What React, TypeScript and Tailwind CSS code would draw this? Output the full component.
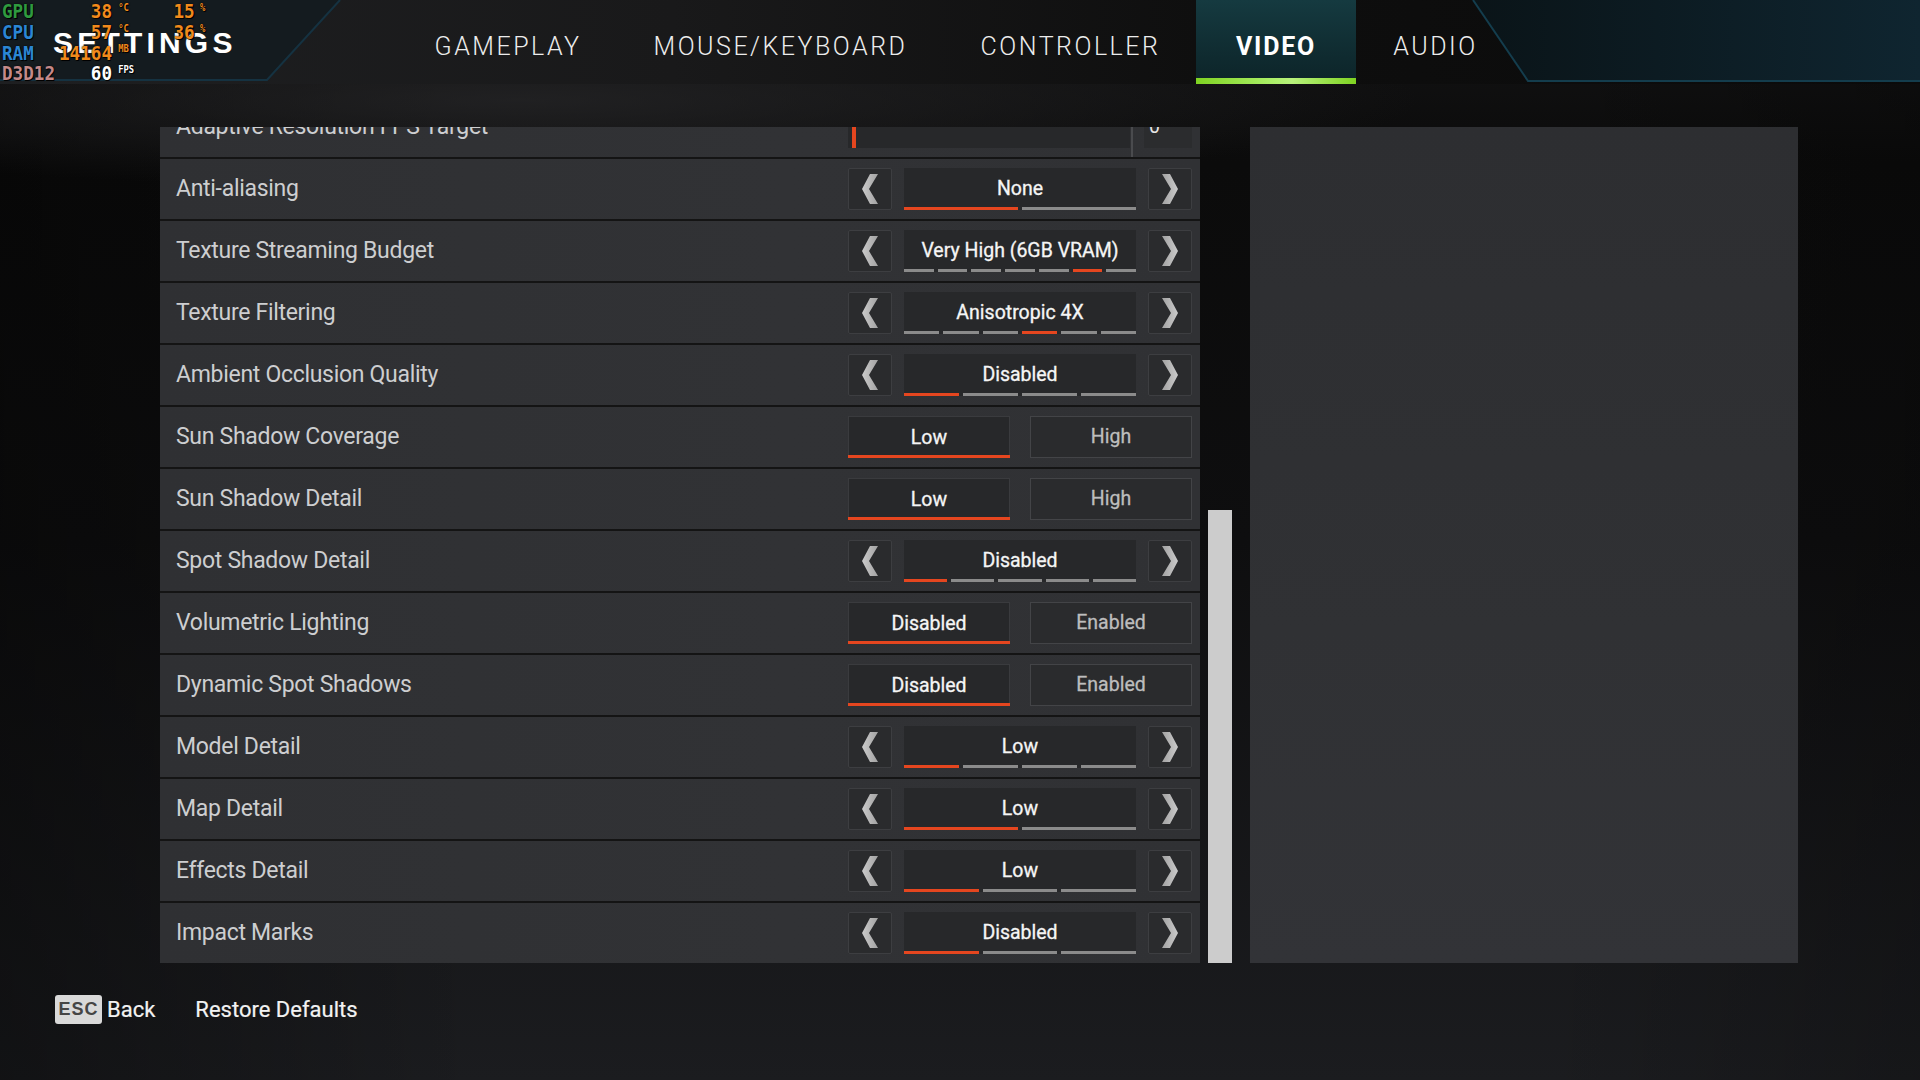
import React from "react";

type Row =
  | { kind: "cycle"; label: string; value: string; segs: number; active: number }
  | { kind: "toggle"; label: string; a: string; b: string }
  | { kind: "slider"; label: string; value: string };

const rows: Row[] = [
  { kind: "slider", label: "Adaptive Resolution FPS Target", value: "0" },
  { kind: "cycle", label: "Anti-aliasing", value: "None", segs: 2, active: 0 },
  { kind: "cycle", label: "Texture Streaming Budget", value: "Very High (6GB VRAM)", segs: 7, active: 5 },
  { kind: "cycle", label: "Texture Filtering", value: "Anisotropic 4X", segs: 6, active: 3 },
  { kind: "cycle", label: "Ambient Occlusion Quality", value: "Disabled", segs: 4, active: 0 },
  { kind: "toggle", label: "Sun Shadow Coverage", a: "Low", b: "High" },
  { kind: "toggle", label: "Sun Shadow Detail", a: "Low", b: "High" },
  { kind: "cycle", label: "Spot Shadow Detail", value: "Disabled", segs: 5, active: 0 },
  { kind: "toggle", label: "Volumetric Lighting", a: "Disabled", b: "Enabled" },
  { kind: "toggle", label: "Dynamic Spot Shadows", a: "Disabled", b: "Enabled" },
  { kind: "cycle", label: "Model Detail", value: "Low", segs: 4, active: 0 },
  { kind: "cycle", label: "Map Detail", value: "Low", segs: 2, active: 0 },
  { kind: "cycle", label: "Effects Detail", value: "Low", segs: 3, active: 0 },
  { kind: "cycle", label: "Impact Marks", value: "Disabled", segs: 3, active: 0 },
];

function Chevron({ dir }: { dir: "l" | "r" }) {
  return (
    <svg width="16" height="30" viewBox="0 0 16 30">
      <defs>
        <linearGradient id={"cg" + dir} x1="0" y1="0" x2="1" y2="0">
          <stop offset="0" stopColor={dir === "l" ? "#cbcbcb" : "#a2a2a2"} />
          <stop offset="1" stopColor={dir === "l" ? "#a2a2a2" : "#cbcbcb"} />
        </linearGradient>
      </defs>
      <polygon
        points={dir === "l" ? "8,0 16,0 7,15 16,30 8,30 0,15" : "0,0 8,0 16,15 8,30 0,30 9,15"}
        fill={"url(#cg" + dir + ")"}
      />
    </svg>
  );
}

function ArrowBtn({ dir }: { dir: "l" | "r" }) {
  return (
    <div className="w-[44px] h-[42px] rounded-[2px] border border-[#3d3e41] bg-[#2a2b2d] flex items-center justify-center">
      <Chevron dir={dir} />
    </div>
  );
}

function Cycle({ value, segs, active }: { value: string; segs: number; active: number }) {
  return (
    <div className="flex items-center gap-[12px]">
      <ArrowBtn dir="l" />
      <div className="w-[232px] h-[42px] bg-[#27282a] flex flex-col">
        <div className="flex-1 flex items-center justify-center pt-[3px] text-[19.5px] font-normal text-[#f5f5f5] [-webkit-text-stroke:0.3px_#f5f5f5] whitespace-nowrap">
          {value}
        </div>
        <div className="h-[3px] flex gap-[4px]">
          {Array.from({ length: segs }).map((_, i) => (
            <div key={i} className={i === active ? "flex-1 bg-[#e5461f]" : "flex-1 bg-[#8b8b8b]"} />
          ))}
        </div>
      </div>
      <ArrowBtn dir="r" />
    </div>
  );
}

function Toggle({ a, b }: { a: string; b: string }) {
  return (
    <div className="flex gap-[20px]">
      <div className="w-[162px] h-[42px] bg-[#27282a] border border-b-0 border-[#3a3b3e] flex flex-col">
        <div className="flex-1 flex items-center justify-center pt-[3px] text-[19.5px] font-normal text-[#f5f5f5] [-webkit-text-stroke:0.3px_#f5f5f5]">{a}</div>
        <div className="h-[3px] bg-[#e5461f] -mx-[1px]" />
      </div>
      <div className="w-[162px] h-[42px] bg-[#2a2b2d] border border-[#434447] flex items-center justify-center text-[19.5px] font-normal text-[#bdbdbd] [-webkit-text-stroke:0.3px_#bdbdbd]">
        {b}
      </div>
    </div>
  );
}

function Slider({ value }: { value: string }) {
  return (
    <div className="flex items-stretch h-[60px]">
      <div className="self-center w-[282px] h-[42px] bg-[#27282a] flex">
        <div className="ml-[4px] w-[4px] bg-[#e5461f]" />
      </div>
      <div className="ml-[1px] w-[2px] bg-[#4a4b4e]" />
      <div className="ml-[11px] self-center w-[48px] h-[42px] bg-[#2b2c2e] flex items-center pl-[5px] text-[19.5px] text-[#e6e6e6]">
        {value}
      </div>
    </div>
  );
}

function SettingRow({ row }: { row: Row }) {
  return (
    <div className="h-[60px] flex items-center bg-[linear-gradient(90deg,#2f3033,#313235_60%,#303134)]">
      <div className="flex-1 pl-[16px] text-[23px] tracking-[-0.3px] text-[#cdced0] whitespace-nowrap">{row.label}</div>
      <div className="pr-[8px]">
        {row.kind === "cycle" && <Cycle value={row.value} segs={row.segs} active={row.active} />}
        {row.kind === "toggle" && <Toggle a={row.a} b={row.b} />}
        {row.kind === "slider" && <Slider value={row.value} />}
      </div>
    </div>
  );
}

const tabs = [
  { t: "GAMEPLAY", w: "w-[216px]", active: false },
  { t: "MOUSE/KEYBOARD", w: "w-[329px]", active: false },
  { t: "CONTROLLER", w: "w-[251px]", active: false },
  { t: "VIDEO", w: "w-[160px]", active: true },
  { t: "AUDIO", w: "w-[159px]", active: false },
];

function Header() {
  return (
    <div className="relative h-[84px] flex bg-[linear-gradient(90deg,#1e1f21_0%,#19191a_35%,#0e0e0e_65%,#0a0a0a_100%)]">
      <svg className="absolute inset-0" width="1920" height="84" viewBox="0 0 1920 84">
        <defs>
          <linearGradient id="rg" x1="0" y1="0" x2="1" y2="0">
            <stop offset="0" stopColor="#0a1418" />
            <stop offset="1" stopColor="#0f2530" />
          </linearGradient>
        </defs>
        <polygon points="0,0 340,0 267,80 0,80" fill="#141b1f" />
        <polyline points="340,0 267,80 0,80" fill="none" stroke="#153241" strokeWidth="2" />
        <polygon points="1473,0 1920,0 1920,81 1528,81" fill="url(#rg)" />
        <polyline points="1473,0 1528,81 1920,81" fill="none" stroke="#143d4d" strokeWidth="2" />
      </svg>
      <div className="relative w-[400px] h-[84px] pl-[53px] flex items-center">
        <span className="font-['Liberation_Sans',sans-serif] font-bold text-[30px] tracking-[4.2px] text-white">SETTINGS</span>
      </div>
      <div className="relative flex">
        {tabs.map((tab) => (
          <div
            key={tab.t}
            className={
              tab.active
                ? tab.w + " h-[84px] flex flex-col bg-[linear-gradient(180deg,#153a40,#0f2a2f_70%,#0d2428)]"
                : tab.w + " h-[84px] flex flex-col"
            }
          >
            <div
              className={
                tab.active
                  ? "flex-1 flex items-center justify-center pt-[16px] text-[25px] font-bold tracking-[1.8px] text-white"
                  : "flex-1 flex items-center justify-center pt-[16px] text-[25px] font-light tracking-[2.5px] text-[#ececec]"
              }
            >
              {tab.t}
            </div>
            <div
              className={
                tab.active
                  ? "h-[6px] bg-[linear-gradient(90deg,#7fd322,#a9ee64_45%,#b8f27c_60%,#7fd322)]"
                  : "h-[6px]"
              }
            />
          </div>
        ))}
      </div>
    </div>
  );
}

function Stats() {
  const unit = "pl-[7px] text-[10px] leading-[10px] self-start mt-[2px]";
  const unit2 = "pl-[6px] text-[10px] leading-[10px] self-start mt-[2px]";
  return (
    <div className="absolute top-[1px] left-[2px] origin-top-left scale-x-[0.88] grid grid-cols-[62px_63px_69px_25px_auto] auto-rows-[20.7px] items-center font-['DejaVu_Sans_Mono',monospace] font-bold text-[20px] leading-[20px] [text-shadow:0_0_2px_#000,1px_1px_0_#000]">
      <span className="text-[#2f9a3f]">GPU</span>
      <span className="text-right text-[#f08a1c]">38</span>
      <span className={unit + " text-[#f08a1c]"}>°C</span>
      <span className="text-right text-[#f08a1c]">15</span>
      <span className={unit2 + " text-[#f08a1c]"}>%</span>

      <span className="text-[#2b86d4]">CPU</span>
      <span className="text-right text-[#f08a1c]">57</span>
      <span className={unit + " text-[#f08a1c]"}>°C</span>
      <span className="text-right text-[#f08a1c]">36</span>
      <span className={unit2 + " text-[#f08a1c]"}>%</span>

      <span className="text-[#2b86d4]">RAM</span>
      <span className="text-right text-[#f08a1c]">14164</span>
      <span className={unit + " text-[#f08a1c]"}>MB</span>
      <span />
      <span />

      <span className="text-[#c48a8a]">D3D12</span>
      <span className="text-right text-white">60</span>
      <span className={unit + " text-white"}>FPS</span>
      <span />
      <span />
    </div>
  );
}

function Footer() {
  return (
    <div className="flex items-center pl-[55px] mt-[30px]">
      <div className="w-[47px] h-[29px] rounded-[3px] bg-[#d9d9d9] flex items-center justify-center font-['Liberation_Sans',sans-serif] font-bold text-[18px] tracking-[1px] text-[#454545]">
        ESC
      </div>
      <span className="ml-[5px] text-[22px] text-[#f2f2f2] [-webkit-text-stroke:0.2px_#f2f2f2]">Back</span>
      <span className="ml-[40px] text-[22px] text-[#f2f2f2] [-webkit-text-stroke:0.2px_#f2f2f2]">Restore Defaults</span>
    </div>
  );
}

export default function App() {
  return (
    <div className="relative w-[1920px] h-[1080px] overflow-hidden font-['Roboto',sans-serif] text-white bg-[radial-gradient(ellipse_900px_90px_at_520px_100px,rgba(40,40,42,0.7),rgba(0,0,0,0)),linear-gradient(90deg,rgba(0,0,0,0.35),rgba(0,0,0,0)_25%,rgba(0,0,0,0)_80%,rgba(0,0,0,0.2)),linear-gradient(180deg,#141415_0%,#0b0b0b_15%,#0e0e0f_50%,#1b1c1f_100%)]">
      <Header />
      <div className="flex pt-[43px] pl-[160px]">
        <div className="w-[1040px] h-[836px] overflow-hidden bg-[#141414]">
          <div className="-mt-[30px] flex flex-col gap-[2px]">
            {rows.map((r, i) => (
              <SettingRow key={i} row={r} />
            ))}
          </div>
        </div>
        <div className="w-[50px] h-[836px]">
          <div className="ml-[8px] mt-[383px] w-[24px] h-[453px] bg-[#cccccc]" />
        </div>
        <div className="w-[548px] h-[836px] bg-[linear-gradient(180deg,#2d2e31,#303134_60%,#323337)]" />
      </div>
      <Footer />
      <Stats />
    </div>
  );
}
